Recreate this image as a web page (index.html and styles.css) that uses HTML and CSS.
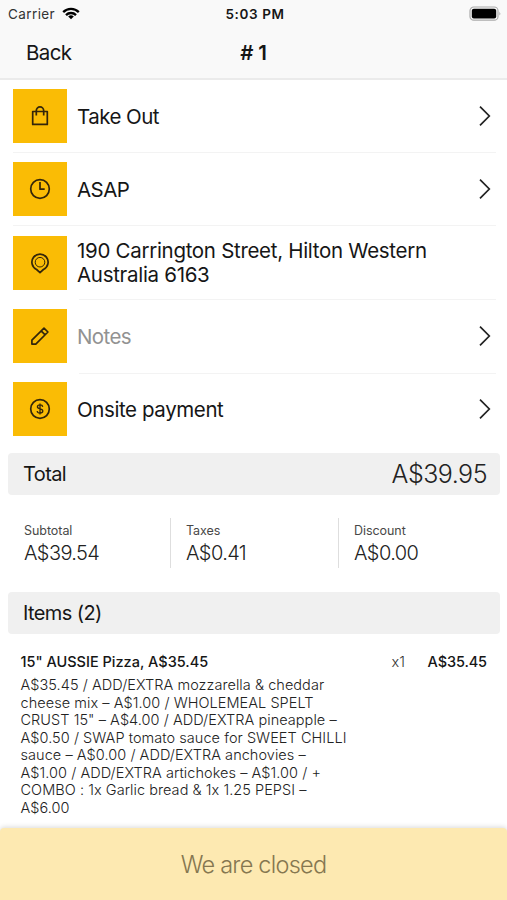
FILE: index.html
```html
<!DOCTYPE html>
<html lang="en">
<head>
<meta charset="utf-8">
<title>Order #1</title>
<link rel="stylesheet" href="styles.css">
</head>
<body>
<div class="screen">
  <header class="header">
    <div class="status">
      <div class="carrier"><span>Carrier</span>
        <svg class="wifi" viewBox="0 0 18 13" width="18" height="13" fill="none" stroke="#000" stroke-width="2.3"><path d="M1.2 5.1a11 11 0 0 1 15.6 0M4 8.1a7 7 0 0 1 10 0"/><path d="M9 12.3 6.2 9.6a4 4 0 0 1 5.6 0z" fill="#000" stroke="none"/></svg>
      </div>
      <span class="time">5:03 PM</span>
      <svg class="battery" viewBox="0 0 33 16" width="33" height="16"><rect x="1" y="1" width="28" height="13.2" rx="3.8" fill="none" stroke="#aaa" stroke-width="1.2"/><rect x="2.8" y="2.8" width="24.4" height="9.6" rx="2" fill="#000"/><path d="M30.4 5.6q1.8 2 0 4z" fill="#aaa"/></svg>
    </div>
    <nav class="nav"><span class="back">Back</span><h1 class="title"># 1</h1><span></span></nav>
  </header>

  <main class="content">
    <ul class="options">
      <li class="option">
        <span class="tile"><svg viewBox="0 0 24 24" width="24" height="24"><path d="M4.7 7.5h14.6v12.9H4.7zM8.3 11.4V6.8a3.7 4 0 0 1 7.4 0v4.6"/></svg></span>
        <span class="label tight">Take Out</span>
        <svg class="chevron" viewBox="0 0 12 22" width="12" height="22"><path d="M1 1.6 10.3 11 1 20.4"/></svg>
      </li>
      <li class="option">
        <span class="tile"><svg viewBox="0 0 24 24" width="24" height="24"><circle cx="12" cy="12" r="9.3"/><path d="M12 5v7.2h4.7"/></svg></span>
        <span class="label tight">ASAP</span>
        <svg class="chevron" viewBox="0 0 12 22" width="12" height="22"><path d="M1 1.6 10.3 11 1 20.4"/></svg>
      </li>
      <li class="option">
        <span class="tile"><svg viewBox="0 0 24 24" width="24" height="24"><path d="M8.6 18.5a8.1 8.1 0 1 1 6.8 0L12 21.6z"/><circle cx="12" cy="11.2" r="4.8" stroke-width="1"/></svg></span>
        <span class="label address">190 Carrington Street, Hilton Western<br>Australia 6163</span>
      </li>
      <li class="option inset">
        <span class="tile"><svg viewBox="0 0 24 24" width="24" height="24"><path d="M3.9 16.2 16 4.1l3.9 3.9L7.8 20.1H3.9zM13.2 6.9l3.9 3.9"/></svg></span>
        <span class="label muted">Notes</span>
        <svg class="chevron" viewBox="0 0 12 22" width="12" height="22"><path d="M1 1.6 10.3 11 1 20.4"/></svg>
      </li>
      <li class="option inset">
        <span class="tile"><svg viewBox="0 0 24 24" width="24" height="24"><circle cx="12" cy="12" r="9.3"/><path d="M14.7 9.8c-.2-1.3-1.2-1.9-2.7-1.9s-2.6.7-2.6 1.9c0 2.9 5.4 1.3 5.4 4.2 0 1.3-1.1 2.1-2.8 2.1s-2.7-.8-2.8-2.1M12 6.6v10.8" stroke-width="1.3"/></svg></span>
        <span class="label">Onsite payment</span>
        <svg class="chevron" viewBox="0 0 12 22" width="12" height="22"><path d="M1 1.6 10.3 11 1 20.4"/></svg>
      </li>
    </ul>

    <section class="bar"><h2 class="bar-title">Total</h2><span class="bar-value">A$39.95</span></section>

    <div class="summary">
      <div class="sum"><span class="sum-name">Subtotal</span><span class="sum-value">A$39.54</span></div>
      <div class="sum"><span class="sum-name">Taxes</span><span class="sum-value">A$0.41</span></div>
      <div class="sum"><span class="sum-name">Discount</span><span class="sum-value">A$0.00</span></div>
    </div>

    <section class="bar"><h2 class="bar-title">Items (2)</h2></section>

    <article class="item">
      <div class="item-head"><h3 class="item-name">15" AUSSIE Pizza, A$35.45</h3><span class="qty">x1</span><span class="price">A$35.45</span></div>
      <p class="details">A$35.45 / ADD/EXTRA mozzarella &amp; cheddar<br>cheese mix – A$1.00 / WHOLEMEAL SPELT<br>CRUST 15" – A$4.00 / ADD/EXTRA pineapple –<br>A$0.50 / SWAP tomato sauce for SWEET CHILLI<br>sauce – A$0.00 / ADD/EXTRA anchovies –<br>A$1.00 / ADD/EXTRA artichokes – A$1.00 / +<br>COMBO : 1x Garlic bread &amp; 1x 1.25 PEPSI –<br>A$6.00</p>
    </article>
  </main>

  <footer class="footer">We are closed</footer>
</div>
</body>
</html>
```
FILE: styles.css
```css
* { box-sizing: border-box; margin: 0; padding: 0; }
body { font-family: Inter, "Liberation Sans", sans-serif; color: #161616; background: #fff; }
.screen { width: 507px; height: 900px; display: flex; flex-direction: column; overflow: hidden; }
svg { display: block; flex: none; }

.header { height: 80px; flex: none; background: #f9f9f9; border-bottom: 2px solid #ebebeb; }
.status { height: 27px; padding: 0 5px 0 8px; display: grid; grid-template-columns: 1fr auto 1fr; align-items: center; font-size: 13.5px; }
.carrier { display: flex; align-items: center; gap: 7px; color: #333; letter-spacing: .4px; }
.time { font-weight: 600; letter-spacing: .6px; }
.battery { justify-self: end; }
.nav { height: 50px; padding: 0 26px; display: grid; grid-template-columns: 1fr auto 1fr; align-items: center; }
.back { font-size: 20.5px; letter-spacing: -.6px; }
.title { font-size: 20.5px; font-weight: 600; letter-spacing: -.1px; }

.content { flex: 1; min-height: 0; }
.options { list-style: none; padding-left: 13px; padding-right: 11px; }
.option { height: 73.15px; display: flex; align-items: center; position: relative; border-bottom: 1px solid #f3f3f3; padding-right: 5px; }
.option:nth-child(n+3) { border-bottom: 0; }
.option.inset::before { content: ""; position: absolute; top: 0; left: 66px; right: 0; height: 1px; background: #f3f3f3; }
.tile { width: 54px; height: 54px; flex: none; background: #fabc05; display: flex; align-items: center; justify-content: center; }
.tile svg { fill: none; stroke: #33260a; stroke-width: 1.7; stroke-linejoin: round; }
.label { flex: 1; padding: 2px 0 0 10px; font-size: 20.5px; line-height: 24.5px; letter-spacing: -.4px; white-space: nowrap; }
.tight { letter-spacing: -.55px; }
.address { letter-spacing: -.3px; padding-top: 1px; }
.muted { color: #929292; letter-spacing: -.6px; }
.chevron { fill: none; stroke: #222; stroke-width: 1.7; }

.bar { height: 42px; margin: 0 7px 0 8px; padding: 0 13px 0 15px; display: flex; align-items: center; justify-content: space-between; background: #f0f0f0; border-radius: 4px; }
.options + .bar { margin-top: 7.25px; }
.bar-title { font-size: 20px; font-weight: 400; letter-spacing: -.6px; }
.bar-value { font-size: 25px; font-weight: 300; letter-spacing: -.5px; color: #222; }

.summary { height: 97px; padding: 23px 0 24px 24px; display: grid; grid-template-columns: 146px 168px 1fr; }
.sum { display: flex; flex-direction: column; justify-content: center; gap: 2px; padding-top: 2px; }
.sum + .sum { border-left: 1px solid #dedede; padding-left: 15px; }
.sum-name { font-size: 12.5px; line-height: 16px; color: #484848; letter-spacing: -.05px; }
.sum-value { font-size: 20px; line-height: 24px; font-weight: 300; letter-spacing: -.6px; color: #222; }

.item { padding: 19px 20px 0 20.5px; }
.item-head { height: 18px; display: grid; grid-template-columns: 1fr auto 82px; align-items: center; font-size: 14.5px; }
.item-name { font-size: 14.5px; font-weight: 500; letter-spacing: 0; }
.qty { color: #333; font-weight: 300; }
.price { text-align: right; font-weight: 500; letter-spacing: -.1px; }
.details { margin-top: 5.5px; font-size: 14.5px; line-height: 17.5px; font-weight: 300; color: #222; letter-spacing: .05px; white-space: nowrap; }

.footer { height: 72px; padding-top: 1px; flex: none; background: #fde9b1; color: #857750; font-size: 23.5px; font-weight: 300; letter-spacing: -.75px; display: flex; align-items: center; justify-content: center; border-radius: 4px 4px 0 0; box-shadow: 0 -1px 5px rgba(0,0,0,.15); }
```
